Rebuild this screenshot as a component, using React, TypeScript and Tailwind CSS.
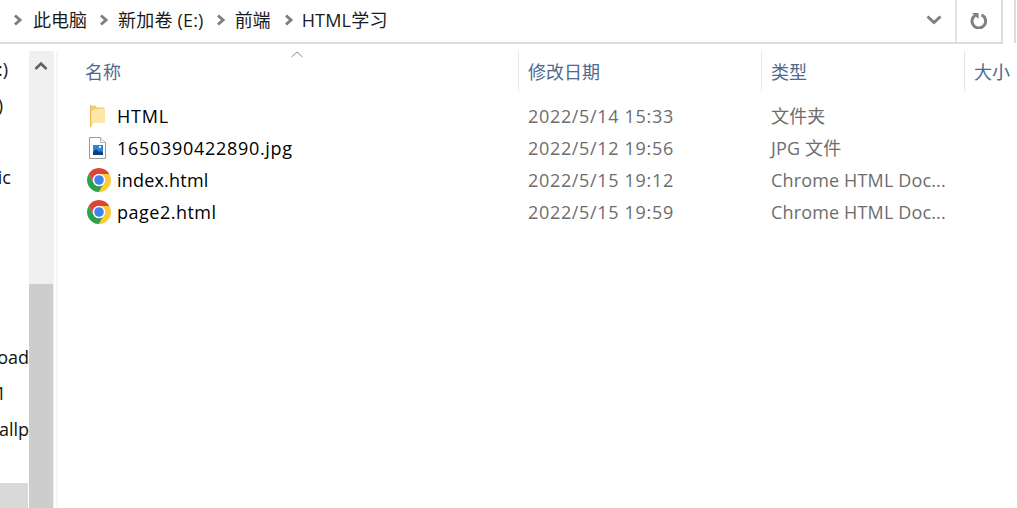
const font = { fontFamily: '"Open Sans", "Noto Sans CJK SC", sans-serif' };

function Chevron() {
  return (
    <svg width="10" height="12" viewBox="0 0 10 12" className="shrink-0">
      <path d="M2 1.500l5 4.500-5 4.500" fill="none" stroke="#7f7f7f" strokeWidth="3" />
    </svg>
  );
}

function FolderIcon() {
  return (
    <svg width="22" height="24" viewBox="0 0 22 24">
      <path d="M3 1.500h5.500l1.500 2h6.500c.6 0 1 .4 1 1V19H6L3 23z" fill="#f3cf72" />
      <path d="M9 5h8.500v14H6.500L4 23.500V7z" fill="#fce8a8" />
      <path d="M3 1.500h1.200v21.500L3 23.500z" fill="#e8bd58" />
    </svg>
  );
}

function ImageFileIcon() {
  return (
    <svg width="22" height="24" viewBox="0 0 22 24">
      <path d="M2.500 1.500h11l5 5v16h-16z" fill="#fff" stroke="#9a9a9a" />
      <path d="M13.500 1.500v5h5" fill="#f0f0f0" stroke="#b5b5b5" />
      <rect x="6" y="9" width="10" height="10" fill="#2f86d6" />
      <path d="M6 19v-3l3-3 3 3 2-1 2 2v2z" fill="#123f78" />
      <rect x="12" y="10" width="2" height="2" fill="#dff0fb" />
    </svg>
  );
}

function ChromeIcon() {
  return (
    <svg width="24" height="24" viewBox="4 4 40 40">
      <path d="M24 14H41.300A20 20 0 0 0 6.700 14L15.300 29Z" fill="#db4437" />
      <path d="M15.300 29 6.700 14A20 20 0 0 0 24 44L32.700 29Z" fill="#2f9e4f" />
      <path d="M32.700 29 24 44A20 20 0 0 0 41.300 14H24Z" fill="#fcc934" />
      <circle cx="24" cy="24" r="10.500" fill="#fff" />
      <circle cx="24" cy="24" r="8" fill="#3f82f0" />
    </svg>
  );
}

const navRows = [
  { text: ":)", cls: "pr-[21px]" },
  { text: ")", cls: "pr-[26px]" },
  { text: "", cls: "" },
  { text: "ic", cls: "pr-[18px]" },
  { text: "", cls: "" },
  { text: "", cls: "" },
  { text: "", cls: "" },
  { text: "", cls: "" },
  { text: "oad", cls: "pr-0" },
  { text: "1", cls: "pr-[23px]" },
  { text: "allp", cls: "pr-0" },
  { text: "", cls: "" },
];

const files = [
  { name: "HTML", nameCls: "tracking-[0.8px]", date: "2022/5/14 15:33", type: "文件夹", icon: <FolderIcon /> },
  { name: "1650390422890.jpg", nameCls: "tracking-[0.7px]", date: "2022/5/12 19:56", type: "JPG 文件", icon: <ImageFileIcon /> },
  { name: "index.html", nameCls: "tracking-[0.2px]", date: "2022/5/15 19:12", type: "Chrome HTML Doc...", icon: <ChromeIcon /> },
  { name: "page2.html", nameCls: "tracking-[0.5px]", date: "2022/5/15 19:59", type: "Chrome HTML Doc...", icon: <ChromeIcon /> },
];

export default function App() {
  return (
    <div className="w-[1017px] h-[508px] overflow-hidden bg-white text-[18px] text-[#111]" style={font}>
      {/* address bar */}
      <div className="flex h-[44px]">
        <div className="flex w-[1003px] border-b-2 border-r-2 border-[#dcdcdc]">
          <div className="flex flex-1 items-center pl-[13px] pb-[2px] text-[#1a1a1a]">
            <Chevron />
            <span className="ml-[10px]">此电脑</span>
            <span className="ml-[12px]"><Chevron /></span>
            <span className="ml-[9px] tracking-[0.2px]">新加卷 (E:)</span>
            <span className="ml-[12px]"><Chevron /></span>
            <span className="ml-[9px]">前端</span>
            <span className="ml-[13px]"><Chevron /></span>
            <span className="ml-[8px] tracking-[0.2px]">HTML学习</span>
            <svg width="16" height="10" viewBox="0 0 16 10" className="ml-auto mr-[13px]">
              <path d="M1.500 1.500 8 7.500l6.500-6" fill="none" stroke="#7f7f7f" strokeWidth="3" />
            </svg>
          </div>
          <div className="flex w-[46px] items-center justify-center border-l-2 border-[#e4e4e4] pb-[2px]">
            <svg width="18" height="18" viewBox="0 0 18 18">
              <path d="M5 4.500a6.800 6.800 0 1 0 6.500-.600" fill="none" stroke="#808080" strokeWidth="3" />
              <path d="M2 2h6.500v6z" fill="#808080" />
            </svg>
          </div>
        </div>
        <div className="ml-[11px] w-[2px] h-[43px] bg-[#dcdcdc]" />
      </div>

      <div className="flex h-[464px]">
        {/* nav pane, clipped on its left */}
        <div className="w-[29px] overflow-hidden pt-[7px]">
          {navRows.map((row, i) => (
            <div key={i} className={`flex h-[36px] items-center justify-end whitespace-nowrap ${row.cls}`}>
              {row.text}
            </div>
          ))}
          <div className="h-[36px] w-[28px] bg-[#d9d9d9]" />
        </div>

        {/* scrollbar */}
        <div className="mt-[7px] flex w-[25px] flex-col bg-[#f0f0f0]">
          <div className="flex h-[233px] justify-center pt-[10px] pr-[1px]">
            <svg width="14" height="10" viewBox="0 0 14 10">
              <path d="M1.500 8 7 2.500 12.500 8" fill="none" stroke="#606060" strokeWidth="2.600" />
            </svg>
          </div>
          <div className="w-[24px] flex-1 bg-[#cdcdcd]" />
        </div>
        <div className="mt-[7px] ml-[2px] w-[2px] bg-[#f6f6f6]" />

        {/* file list */}
        <div className="relative flex-1 pt-[7px]">
          <svg width="12" height="7" viewBox="0 0 12 7" className="absolute left-[233px] top-[7px]">
            <path d="M.5 6 6 1l5.500 5" fill="none" stroke="#8a8a8a" />
          </svg>
          <div className="flex h-[40px] text-[#4d6a8f]">
            <div className="w-[460px] pl-[27px] pt-[8px]">名称</div>
            <div className="w-[243px] border-l border-[#e5e5e5] pl-[9px] pt-[8px]">修改日期</div>
            <div className="w-[203px] border-l border-[#e5e5e5] pl-[9px] pt-[8px]">类型</div>
            <div className="flex-1 border-l border-[#e5e5e5] pl-[9px] pt-[8px] whitespace-nowrap">大小</div>
          </div>
          <div className="mt-[9px]">
            {files.map((f) => (
              <div key={f.name} className="flex h-[32px] items-center whitespace-nowrap">
                <div className="flex w-[59px] justify-start pl-[29px]">{f.icon}</div>
                <div className={`w-[401px] text-[#000] ${f.nameCls}`}>{f.name}</div>
                <div className="w-[243px] pl-[10px] text-[#6d6d6d] tracking-[0.67px]">{f.date}</div>
                <div className="pl-[10px] text-[#6d6d6d] tracking-[0.15px]">{f.type}</div>
              </div>
            ))}
          </div>
        </div>
      </div>
    </div>
  );
}
